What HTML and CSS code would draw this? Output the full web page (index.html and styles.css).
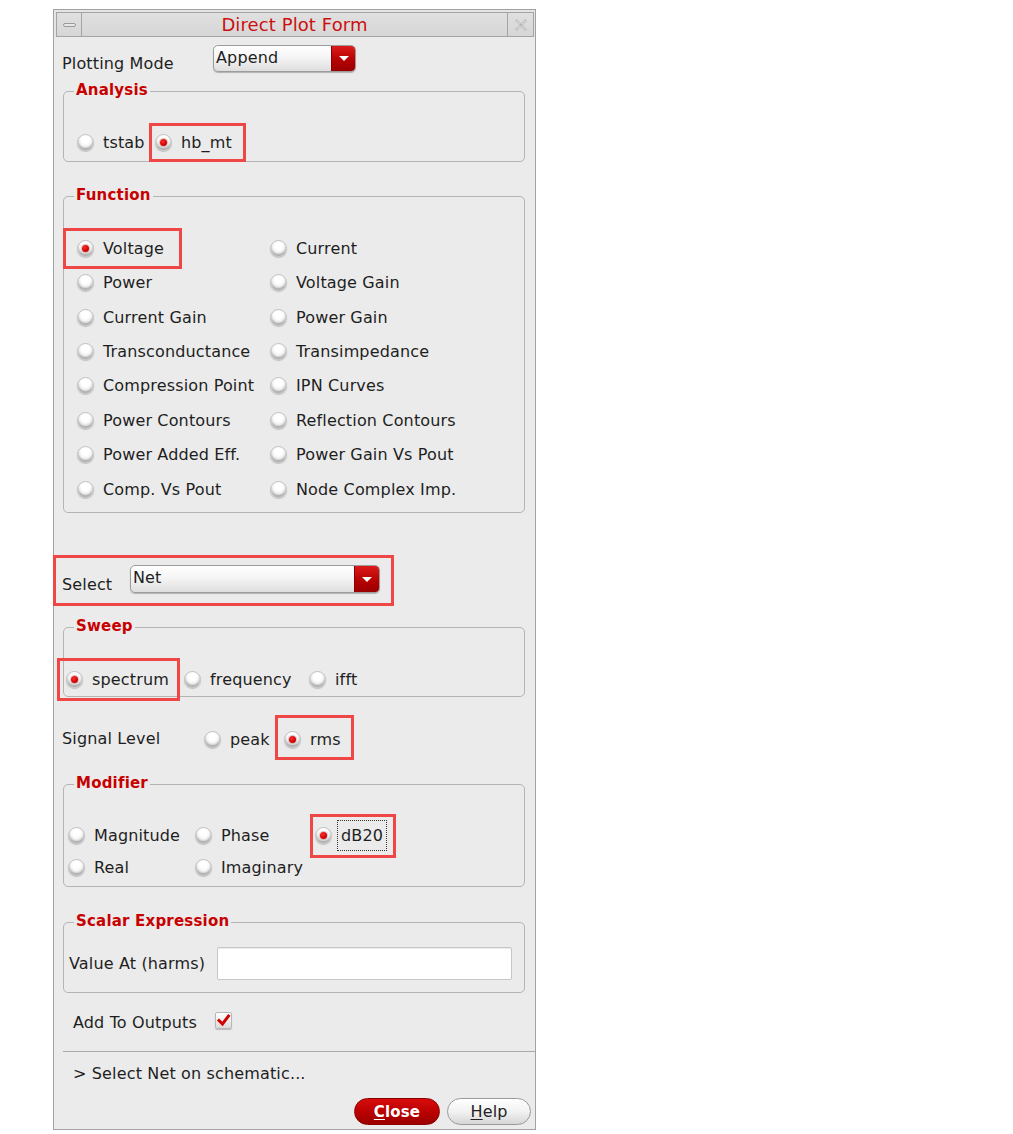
FILE: index.html
```html
<!DOCTYPE html>
<html>
<head>
<meta charset="utf-8">
<title>Direct Plot Form</title>
<link rel="stylesheet" href="styles.css">
</head>
<body>
<div class="window">
  <div class="titlebar">
    <div class="tb-box tb-min"><span class="min-bar"></span></div>
    <div class="tb-box tb-title">Direct Plot Form</div>
    <div class="tb-box tb-close">
      <svg width="14" height="14" viewBox="0 0 14 14"><path d="M2 2 L12 12 M12 2 L2 12" stroke="#a5a5a5" stroke-width="1.2" stroke-dasharray="1.3 1.3" fill="none"/><path d="M3 1 L7 5 L11 1 M13 3 L9 7 L13 11 M11 13 L7 9 L3 13 M1 11 L5 7 L1 3" stroke="#c4c4c4" stroke-width="1" stroke-dasharray="1 1" fill="none"/></svg>
    </div>
  </div>

  <div class="row-mode">
    <span class="lbl mode-lbl">Plotting Mode</span>
    <div class="combo combo-mode"><span class="combo-text">Append</span><span class="combo-arrow"><span class="tri"></span></span></div>
  </div>

  <div class="group g-analysis">
    <span class="legend">Analysis</span>
    <div class="radios analysis-radios">
      <label class="radio"><span class="rb"></span>tstab</label>
      <label class="radio on hl hl-hb"><span class="rb"></span>hb_mt</label>
    </div>
  </div>

  <div class="group g-function">
    <span class="legend">Function</span>
    <div class="radios function-radios">
      <label class="radio on hl hl-volt"><span class="rb"></span>Voltage</label>
      <label class="radio"><span class="rb"></span>Current</label>
      <label class="radio"><span class="rb"></span>Power</label>
      <label class="radio"><span class="rb"></span>Voltage Gain</label>
      <label class="radio"><span class="rb"></span>Current Gain</label>
      <label class="radio"><span class="rb"></span>Power Gain</label>
      <label class="radio"><span class="rb"></span>Transconductance</label>
      <label class="radio"><span class="rb"></span>Transimpedance</label>
      <label class="radio"><span class="rb"></span>Compression Point</label>
      <label class="radio"><span class="rb"></span>IPN Curves</label>
      <label class="radio"><span class="rb"></span>Power Contours</label>
      <label class="radio"><span class="rb"></span>Reflection Contours</label>
      <label class="radio"><span class="rb"></span>Power Added Eff.</label>
      <label class="radio"><span class="rb"></span>Power Gain Vs Pout</label>
      <label class="radio"><span class="rb"></span>Comp. Vs Pout</label>
      <label class="radio"><span class="rb"></span>Node Complex Imp.</label>
    </div>
  </div>

  <div class="row-select hl hl-select">
    <span class="lbl select-lbl">Select</span>
    <div class="combo combo-select"><span class="combo-text">Net</span><span class="combo-arrow"><span class="tri"></span></span></div>
  </div>

  <div class="group g-sweep">
    <span class="legend">Sweep</span>
    <div class="radios sweep-radios">
      <label class="radio on hl hl-spec"><span class="rb"></span>spectrum</label>
      <label class="radio"><span class="rb"></span>frequency</label>
      <label class="radio"><span class="rb"></span>ifft</label>
    </div>
  </div>

  <div class="row-signal">
    <span class="lbl">Signal Level</span>
    <label class="radio"><span class="rb"></span>peak</label>
    <label class="radio on hl hl-rms"><span class="rb"></span>rms</label>
  </div>

  <div class="group g-modifier">
    <span class="legend">Modifier</span>
    <div class="radios modifier-radios">
      <label class="radio"><span class="rb"></span>Magnitude</label>
      <label class="radio"><span class="rb"></span>Phase</label>
      <label class="radio on hl hl-db focus-item"><span class="rb"></span><span class="focus">dB20</span></label>
      <label class="radio"><span class="rb"></span>Real</label>
      <label class="radio"><span class="rb"></span>Imaginary</label>
    </div>
  </div>

  <div class="group g-scalar">
    <span class="legend">Scalar Expression</span>
    <div class="scalar-row">
      <span class="lbl value-lbl">Value At (harms)</span>
      <span class="text-input"></span>
    </div>
  </div>

  <div class="row-add">
    <span class="lbl add-lbl">Add To Outputs</span>
    <span class="checkbox"><svg width="17" height="17" viewBox="0 0 17 17"><path d="M4 8.5 L7.5 12 L13.5 4" stroke="#d40000" stroke-width="3" fill="none" stroke-linecap="square"/></svg></span>
  </div>

  <div class="separator"></div>

  <div class="status">&gt; Select Net on schematic...</div>

  <div class="buttons">
    <span class="btn btn-close"><u>C</u>lose</span>
    <span class="btn btn-help"><u>H</u>elp</span>
  </div>
</div>
</body>
</html>
```

FILE: styles.css
```css
body {
  margin: 0;
  background: #ffffff;
  font-family: "DejaVu Sans", "Liberation Sans", sans-serif;
  font-size: 16px;
  letter-spacing: 0.15px;
  color: #1e1e1e;
}

.window {
  box-sizing: border-box;
  width: 483px;
  height: 1121px;
  margin: 9px 0 0 53px;
  border: 1px solid #a2a2a2;
  background: #ebebeb;
}

/* title bar */
.titlebar {
  display: flex;
  height: 27px;
  box-sizing: border-box;
  padding: 2px 1px 0 2px;
  background: #e4e4e4;
}
.tb-box {
  box-sizing: border-box;
  height: 25px;
  border: 1px solid #a4a4a4;
  background: linear-gradient(#e0e0e0, #d6d6d6);
  display: flex;
  align-items: center;
  justify-content: center;
}
.tb-min { width: 26px; }
.tb-close { width: 27px; }
.tb-title {
  flex: 1;
  border-left: none;
  border-right: none;
  color: #cc1010;
  font-size: 18px;
  line-height: 23px;
  letter-spacing: 0.1px;
}
.min-bar {
  display: block;
  width: 13px;
  height: 4px;
  box-sizing: border-box;
  border: 1px solid #9a9a9a;
  border-radius: 2px;
  background: #e8e8e8;
}

.lbl { line-height: 20px; white-space: nowrap; }

/* combos */
.combo {
  box-sizing: border-box;
  display: flex;
  border: 1px solid #9c9c9c;
  border-radius: 5px;
  background: linear-gradient(#ffffff, #f5f5f5 45%, #dedede);
  box-shadow: 0 1px 1px rgba(0, 0, 0, 0.25);
  overflow: hidden;
}
.combo-text {
  flex: 1;
  padding-left: 2px;
  line-height: 24px;
}
.combo-arrow {
  width: 23px;
  display: flex;
  align-items: center;
  justify-content: center;
  border-left: 1px solid #8a0000;
  background: linear-gradient(#dc1a1a, #b30000 60%, #9a0000);
}
.tri {
  width: 0;
  height: 0;
  border-left: 5px solid transparent;
  border-right: 5px solid transparent;
  border-top: 5px solid #ffffff;
}

.row-mode {
  display: flex;
  align-items: flex-start;
  height: 44px;
  box-sizing: border-box;
  padding-left: 8px;
}
.mode-lbl { width: 151px; margin-top: 17px; }
.combo-mode { width: 143px; height: 27px; margin-top: 8px; }

/* groups */
.group {
  position: relative;
  box-sizing: border-box;
  margin: 0 10px 0 9px;
  border: 1px solid #b4b4b4;
  border-radius: 5px;
}
.legend {
  position: absolute;
  top: -12px;
  left: 10px;
  padding: 0 2px;
  background: #ebebeb;
  color: #c80000;
  font-weight: bold;
  font-size: 15px;
  line-height: 20px;
  letter-spacing: 0.2px;
}

.radios { display: grid; }
.radio {
  display: flex;
  align-items: center;
  gap: 9px;
  height: 20px;
  white-space: nowrap;
}
.rb {
  position: relative;
  flex: none;
  box-sizing: border-box;
  width: 17px;
  height: 17px;
  border-radius: 50%;
  border: 1px solid #c2c2c2;
  background: radial-gradient(circle at 50% 32%, #ffffff 28%, #eeeeee 58%, #c6c6c6 100%);
  box-shadow: inset 0 -2px 2px rgba(0, 0, 0, 0.25), 0 1px 1px rgba(0, 0, 0, 0.2);
}
.on .rb::after {
  content: "";
  position: absolute;
  left: 4px;
  top: 4px;
  width: 7px;
  height: 7px;
  border-radius: 50%;
  background: radial-gradient(circle at 40% 35%, #ff3030, #d00000 60%, #960000);
  box-shadow: 0 0 1px 1px rgba(120, 0, 0, 0.25);
}

/* highlight annotations */
.hl { position: relative; }
.hl::after {
  content: "";
  position: absolute;
  box-sizing: border-box;
  border: 3px solid #ef4646;
  pointer-events: none;
}
.hl-hb::after { left: -6px; top: -9px; width: 97px; height: 39px; }
.hl-volt::after { left: -14px; top: -10px; width: 119px; height: 41px; }
.hl-select::after { left: -1px; top: 0; width: 341px; height: 51px; }
.hl-spec::after { left: -9px; top: -11px; width: 123px; height: 43px; }
.hl-rms::after { left: -9px; top: -14px; width: 79px; height: 45px; }
.hl-db::after { left: -5px; top: -6px; width: 86px; height: 44px; }

.g-analysis { margin-top: 10px; height: 71px; }
.analysis-radios {
  padding: 40px 0 0 13px;
  grid-template-columns: 78px auto;
}

.g-function { margin-top: 34px; height: 317px; }
.function-radios {
  padding: 34px 0 0 13px;
  grid-template-columns: 193px auto;
  grid-auto-rows: 34.43px;
  align-items: center;
}

.row-select {
  display: flex;
  align-items: flex-start;
  margin-top: 42px;
  height: 51px;
  box-sizing: border-box;
  padding-left: 8px;
}
.select-lbl { width: 68px; margin-top: 20px; }
.combo-select { width: 250px; height: 28px; margin-top: 10px; }
.combo-select .combo-arrow { width: 24px; }

.g-sweep { margin-top: 21px; height: 70px; }
.sweep-radios {
  padding: 41px 0 0 2px;
  grid-template-columns: 118px 125px auto;
}

.row-signal {
  display: grid;
  grid-template-columns: 142px 80px auto;
  grid-template-rows: 20px;
  align-items: center;
  margin-top: 18px;
  height: 45px;
  box-sizing: border-box;
  padding: 14px 0 0 8px;
}

.g-modifier { margin-top: 24px; height: 103px; }
.modifier-radios {
  padding: 34px 0 0 4px;
  grid-template-columns: 127px 120px auto;
  grid-auto-rows: 32px;
  align-items: center;
}
.focus-item { gap: 5px; height: auto; }
.focus {
  border: 1px dotted #333333;
  padding: 5px 3px 4px;
  line-height: 20px;
}

.g-scalar { margin-top: 35px; height: 71px; }
.scalar-row {
  display: flex;
  align-items: center;
  padding: 24px 0 0 5px;
}
.value-lbl { width: 148px; }
.text-input {
  box-sizing: border-box;
  width: 295px;
  height: 33px;
  background: #ffffff;
  border: 1px solid #c6c6c6;
  border-radius: 2px;
  box-shadow: inset 0 1px 1px rgba(0, 0, 0, 0.08);
}

.row-add {
  display: flex;
  align-items: flex-start;
  height: 58px;
  box-sizing: border-box;
  padding-left: 19px;
}
.add-lbl { width: 142px; margin-top: 20px; }
.checkbox {
  display: block;
  width: 17px;
  height: 17px;
  margin-top: 19px;
  box-sizing: border-box;
  border: 1px solid #b8b8b8;
  border-radius: 2px;
  background: linear-gradient(#ffffff, #dcdcdc);
  box-shadow: 0 1px 1px rgba(0, 0, 0, 0.2);
}
.checkbox svg { display: block; margin: -1px 0 0 -1px; }

.separator {
  height: 1px;
  margin-left: 9px;
  background: #a9a9a9;
}

.status {
  margin-top: 12px;
  padding-left: 19px;
  line-height: 20px;
}

.buttons {
  display: flex;
  justify-content: flex-end;
  gap: 7px;
  margin-top: 14px;
  padding-right: 4px;
}
.btn {
  box-sizing: border-box;
  height: 27px;
  border-radius: 14px;
  display: flex;
  align-items: center;
  justify-content: center;
  line-height: 20px;
}
.btn u { text-underline-offset: 2px; }
.btn-close {
  width: 86px;
  color: #ffffff;
  font-weight: bold;
  font-size: 15px;
  border: 1px solid #8c0000;
  background: linear-gradient(#d80c0c, #b80000 55%, #9c0000);
}
.btn-help {
  width: 84px;
  color: #222222;
  border: 1px solid #9a9a9a;
  background: linear-gradient(#ffffff, #f2f2f2 50%, #d6d6d6);
}
```
